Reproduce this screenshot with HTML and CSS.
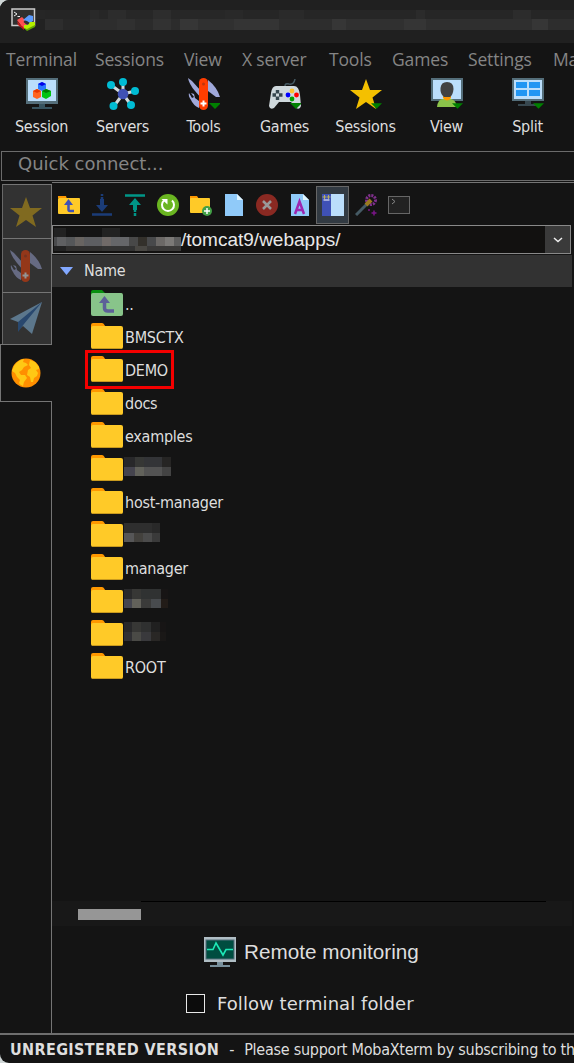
FILE: index.html
```html
<!DOCTYPE html>
<html lang="en">
<head>
<meta charset="utf-8">
<title>MobaXterm</title>
<link rel="stylesheet" href="styles.css">
</head>
<body>
<svg class="defs" width="0" height="0" aria-hidden="true">
  <symbol id="folder" viewBox="0 0 32 26">
    <path d="M0 2Q0 0 2 0H11Q12.500 0 13.500 2L14.500 4H28V10H0Z" fill="#ff9800"/>
    <path d="M0 5Q0 3 2 3H30Q32 3 32 5V24Q32 26 30 26H2Q0 26 0 24Z" fill="#ffca28"/>
    <path d="M1 25.500H31" stroke="#c99a1e"/>
  </symbol>
  <symbol id="star" viewBox="0 0 32 32">
    <path d="M16 1L20 12H32L22.500 19.500L26 31L16 24L6 31L9.500 19.500L0 12H12Z"/>
  </symbol>
  <symbol id="knife" viewBox="0 0 32 32">
    <path d="M0 0L4 3L13 13V20L7 13Q1 6 0 0Z" fill="#9fa8da"/>
    <path d="M20 2Q29 9 32 19H28L20 13Z" fill="#9fa8da"/>
    <path d="M3 15L6 16L7 20L11 23V30Q5 27 3 22Q0 18 1 15L4 20L6 19Z" fill="#9fa8da"/>
    <rect x="11" y="0" width="9" height="32" rx="4.500" fill="#ff3d00"/>
    <circle cx="15.500" cy="6" r="1.500" fill="#bf360c"/>
    <path d="M12.500 25.500H18.500M15.500 22.500V28.500" stroke="#fff" stroke-width="2"/>
  </symbol>
  <symbol id="drop" viewBox="0 0 12 6"><path d="M0 0H12L6 6Z" fill="#008000"/></symbol>
</svg>

<div class="window">
  <header class="titlebar">
    <svg class="app-icon" width="25" height="24" viewBox="0 0 25 24">
      <rect x="1" y="1" width="22.500" height="16.500" fill="#303030" stroke="#ccc" stroke-width="1.500"/>
      <path d="M3 4L6 6L3 8M6.500 8.500H9" stroke="#eee" fill="none"/>
      <path d="M6 12L11 9L14 12L12.500 14L16 17L13 21Z" fill="#ff5050"/>
      <path d="M6 13L13 20V22L7 17Z" fill="#c01818"/>
      <path d="M12 12L18 7L22 8V13L19 15L16 13Z" fill="#5b9bff"/>
      <path d="M13 17L17 17L19 14L24 14V18L16 22L13 20Z" fill="#b6f000"/>
      <path d="M13 20L16 21L24 17V19L16 23Z" fill="#62a800"/>
    </svg>
    <div class="mosaic title-mosaic"></div>
  </header>

  <nav class="menubar">
    <span>Terminal</span><span>Sessions</span><span>View</span><span>X server</span><span>Tools</span><span>Games</span><span>Settings</span><span>Macros</span>
  </nav>

  <div class="toolbar">
    <div class="tool">
      <svg width="32" height="32" viewBox="0 0 32 32">
        <rect width="32" height="26" fill="#546e7a"/><rect x="2" y="2" width="28" height="21" fill="#bbdefb"/>
        <path d="M13 26H19V29H26V31H6V29H13Z" fill="#37535f"/>
        <path d="M12 6L16 4L20 6V11L16 13L12 11Z" fill="#2979ff"/><path d="M12 6L16 4L20 6L16 8Z" fill="#0000e8"/>
        <path d="M7 13L11 11L15 13V19L11 21L7 19Z" fill="#ff6520"/><path d="M7 13L11 11L15 13L11 15Z" fill="#e83800"/>
        <path d="M16 13L20 11L25 13V18L20 21L16 19Z" fill="#00c410"/><path d="M16 13L20 11L25 13L20 15Z" fill="#007c00"/>
      </svg><span>Session</span></div>
    <div class="tool">
      <svg width="32" height="32" viewBox="0 0 32 32">
        <path d="M16 16L4 7M16 16V4M16 16L28 13M16 16L7 28M16 16L24 27" stroke="#cfd8dc" stroke-width="3"/>
        <circle cx="16" cy="16" r="5.300" fill="#3f51b5"/>
        <g fill="#00bcd4"><circle cx="4" cy="7" r="4"/><circle cx="16" cy="4" r="4"/><circle cx="28" cy="13" r="4"/><circle cx="6.500" cy="28" r="4"/><circle cx="24" cy="27" r="4"/></g>
      </svg><span>Servers</span></div>
    <div class="tool">
      <svg width="32" height="32" viewBox="0 0 32 32"><use href="#knife"/><use href="#drop" x="21" y="25" width="12" height="6"/></svg><span>Tools</span></div>
    <div class="tool">
      <svg width="32" height="32" viewBox="0 0 32 32">
        <path d="M16 11V8Q16 5 20 6Q25 7 26 1" fill="none" stroke="#455a64" stroke-width="1.500"/>
        <path d="M7 8H25Q30 8 31 17L32 28Q31 32 27 30L22 24H10L5 30Q1 32 0 28L2 15Q3 8 7 8Z" fill="#cfd8dc"/>
        <path d="M8.500 12V22M3.500 17H13.500" stroke="#37474f" stroke-width="3.400"/><rect x="7" y="15.500" width="3" height="3" fill="#cfd8dc"/>
        <circle cx="23" cy="13" r="2.400" fill="#fbc02d"/><circle cx="19" cy="17" r="2.400" fill="#00f"/><circle cx="27.500" cy="17" r="2.400" fill="#f00"/><circle cx="23" cy="21" r="2.400" fill="#00a000"/>
        <use href="#drop" x="21" y="25" width="12" height="6"/>
      </svg><span>Games</span></div>
    <div class="tool">
      <svg width="32" height="32" viewBox="0 0 32 32"><use href="#star" fill="#f4c000"/><use href="#drop" x="21" y="25" width="11" height="6"/></svg><span>Sessions</span></div>
    <div class="tool">
      <svg width="32" height="32" viewBox="0 0 32 32">
        <rect width="32" height="23" fill="#546e7a"/><rect x="2" y="2" width="28" height="19" fill="#bbdefb"/>
        <path d="M6 29Q7 21 12 21H20Q25 22 26 29Z" fill="#8bc34a"/><path d="M12 18H20V20Q16 25 12 20Z" fill="#ff9800"/>
        <path d="M9.500 10Q10 4 16 4Q22.500 4 22.500 11Q22 17 19 19H13Q9 16 9.500 10Z" fill="#424242"/>
        <use href="#drop" x="21" y="25" width="11" height="6"/>
      </svg><span>View</span></div>
    <div class="tool">
      <svg width="32" height="32" viewBox="0 0 32 32">
        <rect width="32" height="23" fill="#546e7a"/><rect x="2" y="2" width="28" height="19" fill="#bbdefb"/>
        <path d="M4 4H15V10H4ZM17 4H28V10H17ZM4 12H15V18H4ZM17 12H28V18H17Z" fill="#2196f3"/>
        <path d="M13 23H19V26H25V28H6V26H13Z" fill="#37474f"/>
        <use href="#drop" x="21" y="25" width="11" height="6"/>
      </svg><span>Split</span></div>
  </div>

  <div class="quick">Quick connect...</div>

  <main class="body">
    <aside class="tabs">
      <div class="tab"><svg width="32" height="32" viewBox="0 0 32 32"><use href="#star" fill="#806a20"/></svg></div>
      <div class="tab"><svg class="dim" width="32" height="32"><use href="#knife"/></svg></div>
      <div class="tab tab-plane"><svg width="33" height="33" viewBox="0 0 33 33">
        <path d="M32 0L22 32L13 24L8 28V20L0 17Z" fill="#5c778c"/><path d="M32 0L8 20V30L14 22Z" fill="#29486e"/></svg></div>
      <div class="tab tab-active"><svg width="30" height="30" viewBox="0 0 30 30">
        <circle cx="15" cy="15" r="14.500" fill="#ff8f00"/>
        <path d="M3 8Q7 2 13 1L12 4L15 5L17 7L13 9L11 12L8 14L10 17H14L16 20L13 24L12 28Q9 27 8 25L9 22L6 19L4 15L1 13ZM19 2L24 4L28 9V11L25 12L27 15L26 18L23 20L22 24L20 24L19 19L16 17L17 12L20 10L18 7Z" fill="#ffc814"/>
      </svg></div>
      <div class="rest"></div>
    </aside>

    <section class="browser">
      <div class="filebar">
        <svg width="22" height="22" viewBox="0 0 22 22"><path d="M0 4V2H8L9 5Z" fill="#ff9800"/><rect y="4" width="22" height="16" rx="1" fill="#ffca28"/><path d="M10.500 9V15.500Q10.500 17 12 17H16" stroke="#3f51b5" stroke-width="2.500" fill="none"/><path d="M6 11L10.500 5L15 11Z" fill="#3f51b5"/></svg>
        <svg width="22" height="22" viewBox="0 0 22 22"><path d="M1 20.500H21M11 0V2M11 3V5" stroke="#1b3c78" stroke-width="2.500"/><path d="M9 5H13V11H17L11 18L5 11H9Z" fill="#1b3c78"/></svg>
        <svg width="22" height="22" viewBox="0 0 22 22"><path d="M1 1.500H21M11 16V18M11 19V22" stroke="#009688" stroke-width="2.500"/><path d="M9 16H13V11H17L11 4L5 11H9Z" fill="#009688"/></svg>
        <svg width="22" height="22" viewBox="0 0 22 22"><circle cx="11" cy="11" r="11" fill="#6ab521"/><path d="M7 6.500A6 6 0 1 0 15 6.500" fill="none" stroke="#fff" stroke-width="2"/><path d="M4.500 5H10.500V10.500Z" fill="#fff"/></svg>
        <svg width="22" height="22" viewBox="0 0 22 22"><path d="M0 5V2H7L9 5Z" fill="#ff9800"/><rect y="4" width="20" height="15" rx="1" fill="#ffca28"/><circle cx="17" cy="17" r="5" fill="#43a047"/><path d="M14 17H20M17 14V20" stroke="#fff" stroke-width="1.500"/></svg>
        <svg width="22" height="22" viewBox="0 0 22 22"><path d="M2 0H14L20 6V22H2Z" fill="#90caf9"/><path d="M14 0V6H20Z" fill="#e1f5fe"/></svg>
        <svg width="22" height="22" viewBox="0 0 22 22"><circle cx="11" cy="11" r="11" fill="#8a2922"/><path d="M7 7L15 15M15 7L7 15" stroke="#999" stroke-width="2.500"/></svg>
        <svg width="22" height="22" viewBox="0 0 22 22"><path d="M2 0H14L20 6V22H2Z" fill="#90caf9"/><path d="M14 0V6H20Z" fill="#e1f5fe"/><path d="M6 20L10.500 7.500L15 20M7.500 16H13.500" fill="none" stroke="#9c27b0" stroke-width="2.500"/></svg>
        <span class="pressed"><svg width="22" height="22" viewBox="0 0 22 22"><rect width="22" height="22" fill="#bbdefb"/><rect width="9" height="22" fill="#3f51b5"/><path d="M2.500 1V5M.500 3H4.500M6.500 1V5M5 3H8.500" stroke="#b8b060"/><path d="M1.500 6H7.500" stroke="#fff"/></svg></span>
        <svg width="22" height="22" viewBox="0 0 22 22"><circle cx="16" cy="6" r="4.500" fill="none" stroke="#81308e" stroke-width="3" stroke-dasharray="2 1"/><path d="M1 21L12 10" stroke="#455a64" stroke-width="3"/><path d="M11 11L16 6" stroke="#9a7920" stroke-width="4"/><path d="M19 16.500V21.500M16.500 19H21.500M14 15V17" stroke="#7b1588" stroke-width="1.500"/></svg>
        <svg width="22" height="22" viewBox="0 0 22 22"><rect x=".5" y="2.500" width="21" height="17" fill="#222" stroke="#666"/><path d="M4 5L7 7.500L4 10" stroke="#888" fill="none"/></svg>
      </div>

      <div class="path">
        <div class="mosaic path-mosaic"></div><span class="path-text">/tomcat9/webapps/</span>
        <span class="path-drop"><svg width="10" height="6" viewBox="0 0 10 6"><path d="M1 1L5 4.500L9 1" fill="none" stroke="#eee" stroke-width="1.500"/></svg></span>
      </div>

      <div class="columns"><svg width="13" height="8" viewBox="0 0 13 8"><path d="M0 0H13L6.500 8Z" fill="#82a8ff"/></svg><span>Name</span></div>

      <ul class="files">
        <li><svg width="32" height="26" viewBox="0 0 32 26"><path d="M0 2Q0 0 2 0H11L14 3H31V10H0Z" fill="#089010"/><rect y="3" width="32" height="23" rx="2" fill="#88c48a"/><path d="M13.500 9V18Q13.500 21 17 21H23" fill="none" stroke="#5c6098" stroke-width="3.500"/><path d="M8 13L13.500 6L19 13Z" fill="#5c6098"/></svg><span>..</span></li>
        <li><svg width="32" height="26"><use href="#folder"/></svg><span>BMSCTX</span></li>
        <li class="marked"><svg width="32" height="26"><use href="#folder"/></svg><span>DEMO</span></li>
        <li><svg width="32" height="26"><use href="#folder"/></svg><span>docs</span></li>
        <li><svg width="32" height="26"><use href="#folder"/></svg><span>examples</span></li>
        <li><svg width="32" height="26"><use href="#folder"/></svg><i class="mosaic m1"></i></li>
        <li><svg width="32" height="26"><use href="#folder"/></svg><span>host-manager</span></li>
        <li><svg width="32" height="26"><use href="#folder"/></svg><i class="mosaic m2"></i></li>
        <li><svg width="32" height="26"><use href="#folder"/></svg><span>manager</span></li>
        <li><svg width="32" height="26"><use href="#folder"/></svg><i class="mosaic m3"></i></li>
        <li><svg width="32" height="26"><use href="#folder"/></svg><i class="mosaic m4"></i></li>
        <li><svg width="32" height="26"><use href="#folder"/></svg><span>ROOT</span></li>
      </ul>

      <div class="scroll"><div class="thumb"></div><div class="track"></div></div>

      <div class="monitor">
        <svg width="32" height="31" viewBox="0 0 32 31"><rect width="32" height="25" fill="#b0bec5"/><rect x="2" y="3" width="28" height="19" fill="#004d40" stroke="#546e7a"/><path d="M3 12.500H9L12 6L19 18L22 12.500H29" fill="none" stroke="#1de9b6" stroke-width="1.600"/><path d="M13 25H19V28H26V30H6V28H13Z" fill="#78909c"/></svg>
        <span>Remote monitoring</span>
      </div>
      <div class="follow"><i class="box"></i><span>Follow terminal folder</span></div>
    </section>
  </main>

  <footer class="status"><b>UNREGISTERED VERSION</b><span class="dash">-</span><span>Please support MobaXterm by subscribing to the professional edition</span></footer>
</div>
</body>
</html>
```

FILE: styles.css
```css
* { box-sizing: border-box; }
body { margin: 0; background: #cfd6d6; }
svg { display: block; flex: none; }
.defs { position: absolute; }
.window {
  width: 574px; height: 1063px; overflow: hidden;
  display: flex; flex-direction: column;
  background: #141414; color: #dedede;
  border-radius: 9px 0 0 9px;
  font: 16px/20px "DejaVu Sans Condensed", "Noto Sans", sans-serif;
  white-space: nowrap;
}
.titlebar { height: 43px; background: #202020; display: flex; padding: 8px 0 0 11px; }
.mosaic { flex: none; background-repeat: no-repeat; }
.title-mosaic {
  width: 538px; height: 20px; margin-top: 2px;
  background-image:
    linear-gradient(90deg, #262626 9px, #252525 9px 54px, #292929 54px 63px, #262626 63px 72px, #2c2c2c 72px 90px, #272727 90px 117px, #2d2d2d 117px 135px, #272727 135px 189px, #292929 189px 207px, #262626 207px 243px, #2a2a2a 243px 268px, #262626 268px 380px, #2b2b2b 380px 389px, #262626 389px 477px, #2c2c2c 477px 495px, #262626 495px),
    linear-gradient(90deg, #222 9px, #2d2d2d 9px 27px, #272727 27px 54px, #2d2d2d 54px 81px, #303030 81px 99px, #2b2b2b 99px 117px, #323232 117px 135px, #2c2c2c 135px 144px, #363636 144px 162px, #303030 162px 198px, #343434 198px 243px, #2d2d2d 243px 296px, #363636 296px 310px, #303030 310px 368px, #353535 368px 390px, #2f2f2f 390px 496px, #363636 496px 512px, #2d2d2d 512px);
  background-size: 100% 9px, 100% 11px; background-position: 0 0, 0 9px;
}
.menubar {
  height: 32px; padding: 3px 0 0 6px;
  display: grid; grid-template-columns: 89px 89px 58px 87px 63px 76px 85px 90px;
  color: #858585; font: 17.500px/26px "Open Sans", sans-serif; letter-spacing: -.15px;
}
.toolbar { height: 76px; padding: 3px 0 0; display: flex; margin-left: 1px; flex: none; }
.tool { width: 81px; flex: none; display: flex; flex-direction: column; align-items: center; gap: 7px; letter-spacing: -.25px; }
.quick {
  height: 30px; margin-left: 1px; padding-left: 16px; flex: none;
  border: 1px solid #6b6b6b; border-right: 0;
  color: #858585; font: 18px/24px "DejaVu Sans", sans-serif;
}
.body { height: 851px; margin-top: 1px; flex: none; display: flex; }
.tabs { width: 52px; flex: none; display: flex; flex-direction: column; padding-top: 2px; }
.tab {
  height: 54px; margin-left: 2px; flex: none;
  background: #323232; border: 1px solid #757575; border-bottom: 0; border-left-color: #686868;
  display: flex; align-items: center; justify-content: center; padding-right: 2px;
}
.tab-plane { height: 52px; }
.dim { opacity: .48; }
.tab-active { height: 58px; margin-left: 0; background: #141414; border: 1px solid #757575; border-right: 0; }
.rest { flex: 1; border-right: 1px solid #757575; }
.browser { flex: 1; min-width: 0; border-top: 1px solid #757575; }
.filebar { height: 42px; padding-left: 6px; display: flex; align-items: center; gap: 11px; padding-top: 2px; }
.pressed { width: 33px; height: 38px; margin: 0 -5px 0 -6px; flex: none; background: #323a42; border: 1px solid #666; display: flex; align-items: center; justify-content: center; }
.path {
  width: 519px; height: 29px; border: 1px solid #898989; background: #121110;
  display: flex; align-items: center; font: 19px/24px "Liberation Sans", sans-serif;
}
.path-mosaic {
  width: 127px; height: 23px; margin-left: 1px;
  background-image:
    linear-gradient(90deg, #222 12px, #141414 12px 48px, #222 48px 66px, #141414 66px),
    linear-gradient(90deg, #4a4b4d 3px, #5f6062 3px 12px, #555759 12px 21px, #686461 21px 30px, #5d5e61 30px 48px, #706a68 48px 57px, #656669 57px 75px, #484848 75px 84px, #33302b 84px 93px, #48494b 93px 102px, #6b6866 102px 111px, #7b7977 111px 120px, #5e5e5e 120px),
    linear-gradient(90deg, #222 12px, #302f2e 12px 48px, #333 48px 81px, #494743 81px 93px, #3a3938 93px);
  background-size: 100% 9px, 100% 9px, 100% 5px; background-position: 0 0, 0 9px, 0 18px;
}
.path-text { flex: 1; color: #e8e8e8; }
.path-drop { width: 25px; height: 27px; background: #3a3a3a; display: flex; align-items: center; justify-content: center; }
.columns {
  width: 520px; height: 32px; margin-top: 1px; padding-left: 8px; background: #323232;
  display: flex; align-items: center; gap: 11px; letter-spacing: -.25px;
}
.files { list-style: none; margin: 0; padding: 0; height: 614px; }
.files li { height: 33px; padding-left: 39px; display: flex; align-items: center; gap: 2px; letter-spacing: -.25px; }
.files svg { margin-top: -1px; }
.files span { padding-top: 2px; }
.files .marked { position: relative; }
.marked::after { content: ""; box-sizing: border-box; position: absolute; left: 33px; top: -3px; width: 89px; height: 39px; border: 3px solid #f40000; }
.files .mosaic { height: 19px; margin: -4px 0 0 -1px; background-size: 100% 10px, 100% 9px; background-position: 0 0, 0 10px; }
.m1 { width: 47px; background-image: linear-gradient(90deg, #28282a 11px, #363735 11px 20px, #333437 20px 38px, #262524 38px), linear-gradient(90deg, #45444e 11px, #62625b 11px 20px, #535353 20px 38px, #434343 38px); }
.m2 { width: 36px; background-image: linear-gradient(90deg, #2e2e2e 28px, #292929 28px), linear-gradient(90deg, #565657 10px, #43413d 10px 19px, #4b4b4b 19px 28px, #3a3a3a 28px); }
.m3 { width: 44px; background-image: linear-gradient(90deg, #29292a 8px, #373735 8px 17px, #303232 17px 37px, #171515 37px), linear-gradient(90deg, #454650 8px, #62615a 8px 17px, #3b3b3a 17px 27px, #484b4e 27px 37px, #221c18 37px); }
.m4 { width: 42px; background-image: linear-gradient(90deg, #28282a 8px, #373735 8px 17px, #2f3030 17px 27px, #202020 27px 36px, #171515 36px), linear-gradient(90deg, #303034 8px, #4a4a46 8px 17px, #39393c 17px 27px, #292725 27px 36px, #1a1817 36px); }
.scroll { height: 25px; width: 520px; background: #181818; display: flex; padding-left: 26px; }
.thumb { width: 63px; height: 11px; margin-top: 8px; background: #969696; }
.track { width: 405px; height: 1px; background: #000; }
.monitor { height: 52px; padding-left: 152px; display: flex; align-items: center; gap: 8px; font: 20.700px/24px "Liberation Sans", sans-serif; }
.follow { height: 51px; padding-left: 134px; display: flex; align-items: center; gap: 12px; font: 18px/24px "DejaVu Sans", sans-serif; letter-spacing: .06px; }
.box { width: 19px; height: 19px; border: 1px solid #e8e8e8; background: #0c0c0c; }
.status { height: 30px; flex: none; border-top: 2px solid #6e6e6e; padding: 1px 0 0 10px; display: flex; align-items: center; }
.status b { letter-spacing: .37px; }
.status span { letter-spacing: -.25px; }
.status .dash { margin: 0 10px; }
```
